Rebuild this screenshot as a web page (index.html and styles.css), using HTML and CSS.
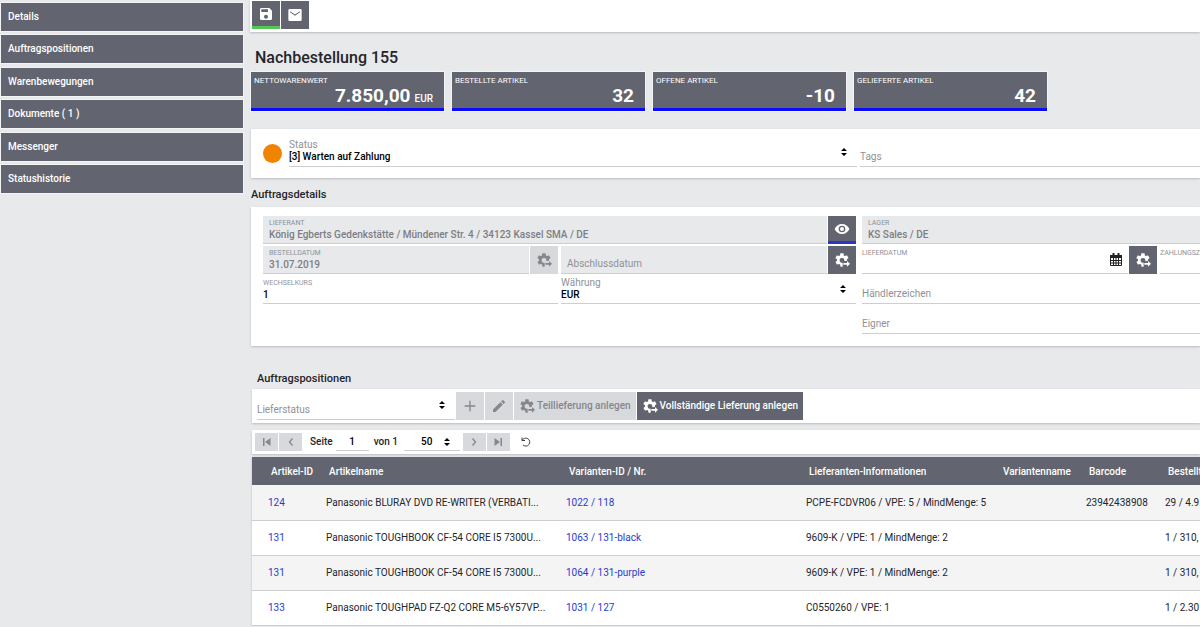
FILE: index.html
```html
<!DOCTYPE html>
<html lang="de">
<head>
<meta charset="utf-8">
<title>Nachbestellung 155</title>
<link rel="stylesheet" href="styles.css">
</head>
<body>
<svg class="sprite" aria-hidden="true">
  <symbol id="gear" viewBox="0 0 24 24">
    <path fill="currentColor" fill-rule="evenodd" d="M19.4 13c.1-.7.1-1.300 0-2l2.100-1.600c.2-.2.3-.4.1-.7l-2-3.400c-.1-.2-.4-.3-.6-.2l-2.500 1c-.5-.4-1.100-.7-1.700-1l-.4-2.600c0-.3-.2-.5-.5-.5h-4c-.3 0-.5.2-.5.5l-.4 2.600c-.6.3-1.200.6-1.700 1l-2.500-1c-.2-.1-.5 0-.6.2l-2 3.400c-.1.3-.1.5.1.7L4.600 11c-.1.700-.1 1.300 0 2l-2.100 1.600c-.2.2-.3.4-.1.7l2 3.400c.1.2.4.3.6.2l2.500-1c.5.4 1.100.7 1.700 1l.4 2.600c0 .3.2.5.5.5H13v-6a3.600 3.600 0 1 1 2.600-3.300v1.300Z"/>
    <path fill="currentColor" d="M14 16.500h5.500v-3l4.500 4.200-4.500 4.300v-3H14z"/>
  </symbol>
  <symbol id="sort" viewBox="0 0 8 10"><path fill="currentColor" d="M4 1 7 4H1zM4 9 7 6H1z"/></symbol>
</svg>
<div class="page">
  <nav class="sidebar">
    <a href="#details">Details</a>
    <a href="#positionen">Auftragspositionen</a>
    <a href="#waren">Warenbewegungen</a>
    <a href="#dokumente">Dokumente ( 1 )</a>
    <a href="#messenger">Messenger</a>
    <a href="#status">Statushistorie</a>
  </nav>
  <main class="main">
    <div class="toolbar">
      <button class="btn dark save" aria-label="Speichern"><svg class="ico" viewBox="0 0 24 24"><path fill="currentColor" d="M17 3H5a2 2 0 0 0-2 2v14a2 2 0 0 0 2 2h14a2 2 0 0 0 2-2V7zm-5 16a3 3 0 1 1 0-6 3 3 0 0 1 0 6zm3-10H5V5h10z"/></svg></button>
      <button class="btn dark" aria-label="E-Mail"><svg class="ico" viewBox="0 0 24 24"><path fill="currentColor" d="M20 3H4a2 2 0 0 0-2 2v14a2 2 0 0 0 2 2h16a2 2 0 0 0 2-2V5a2 2 0 0 0-2-2zm-.5 5L12 13 4.500 8V6.200l7.500 5 7.500-5z"/></svg></button>
    </div>
    <h1>Nachbestellung 155</h1>
    <div class="tiles">
      <div class="tile"><span class="cap">Nettowarenwert</span><p><strong>7.850,00</strong><small>EUR</small></p></div>
      <div class="tile"><span class="cap">Bestellte Artikel</span><p><strong>32</strong></p></div>
      <div class="tile"><span class="cap">Offene Artikel</span><p><strong>-10</strong></p></div>
      <div class="tile"><span class="cap">Gelieferte Artikel</span><p><strong>42</strong></p></div>
    </div>

    <section class="card status">
      <span class="dot"></span>
      <div class="field status-field">
        <label for="status">Status</label>
        <select id="status"><option>[3] Warten auf Zahlung</option></select>
        <svg class="sort"><use href="#sort"/></svg>
      </div>
      <div class="field bare grow"><input aria-label="Tags" placeholder="Tags"></div>
    </section>

    <h2>Auftragsdetails</h2>
    <section class="card details" id="details">
      <div class="half">
        <div class="pair wide">
          <div class="field filled"><label class="cap" for="lieferant">Lieferant</label><input id="lieferant" readonly value="König Egberts Gedenkstätte / Mündener Str. 4 / 34123 Kassel SMA / DE"></div>
          <button class="btn dark view" aria-label="Lieferant ansehen"><svg class="ico" viewBox="0 0 24 24"><path fill="currentColor" fill-rule="evenodd" d="M12 4.500C7 4.500 2.700 7.600 1 12c1.700 4.400 6 7.500 11 7.500s9.300-3.100 11-7.500c-1.700-4.400-6-7.500-11-7.500zM12 17a5 5 0 1 1 0-10 5 5 0 0 1 0 10zm0-2a3 3 0 1 0 0-6 3 3 0 0 0 0 6z"/></svg></button>
        </div>
        <div class="pair">
          <div class="field filled"><label class="cap" for="bestelldatum">Bestelldatum</label><input id="bestelldatum" readonly value="31.07.2019"></div>
          <button class="btn pale" disabled aria-label="Bestelldatum setzen"><svg class="ico"><use href="#gear"/></svg></button>
        </div>
        <div class="pair">
          <div class="field filled bare"><input aria-label="Abschlussdatum" placeholder="Abschlussdatum" readonly></div>
          <button class="btn dark" aria-label="Abschlussdatum setzen"><svg class="ico"><use href="#gear"/></svg></button>
        </div>
        <div class="field"><label class="cap" for="kurs">Wechselkurs</label><input id="kurs" value="1"></div>
        <div class="field"><label for="waehrung">Währung</label><select id="waehrung"><option>EUR</option></select><svg class="sort"><use href="#sort"/></svg></div>
      </div>
      <div class="half right">
        <div class="field filled wide"><label class="cap" for="lager">Lager</label><input id="lager" readonly value="KS Sales / DE"></div>
        <div class="pair">
          <div class="field"><label class="cap" for="lieferdatum">Lieferdatum</label><input id="lieferdatum">
            <svg class="cal" viewBox="0 0 12 13"><path fill="none" stroke="currentColor" d="M.5 2.500h11v10H.5zM.5 7.500h11M.5 10h11M3.500 5v7M6 5v7M8.500 5v7"/><path fill="currentColor" d="M0 2h12v3H0zM2.500 0h2v3h-2zM7.500 0h2v3h-2z"/></svg>
          </div>
          <button class="btn dark" aria-label="Lieferdatum setzen"><svg class="ico"><use href="#gear"/></svg></button>
        </div>
        <div class="field"><label class="cap" for="ziel">Zahlungsziel</label><input id="ziel"></div>
        <div class="field bare wide"><input aria-label="Händlerzeichen" placeholder="Händlerzeichen"></div>
        <div class="field bare wide"><input aria-label="Eigner" placeholder="Eigner"></div>
      </div>
    </section>

    <div class="positions" id="positionen">
      <h2>Auftragspositionen</h2>
      <div class="card filter">
        <div class="field bare lieferstatus"><select aria-label="Lieferstatus"><option>Lieferstatus</option></select><svg class="sort"><use href="#sort"/></svg></div>
        <button class="btn pale" disabled aria-label="Hinzufügen"><svg class="ico" viewBox="0 0 24 24"><path stroke="currentColor" stroke-width="2" d="M12 4v16M4 12h16"/></svg></button>
        <button class="btn pale" disabled aria-label="Bearbeiten"><svg class="ico" viewBox="0 0 24 24"><path fill="currentColor" d="M3 17.200V21h3.800L17.800 9.900l-3.700-3.700zM20.700 7a1 1 0 0 0 0-1.400l-2.300-2.300a1 1 0 0 0-1.400 0l-1.900 1.800 3.800 3.800z"/></svg></button>
        <button class="btn pale text" disabled><svg class="ico"><use href="#gear"/></svg>Teillieferung anlegen</button>
        <button class="btn dark text"><svg class="ico"><use href="#gear"/></svg>Vollständige Lieferung anlegen</button>
      </div>
      <div class="card pager">
        <button class="step" disabled aria-label="Erste Seite"><svg viewBox="0 0 12 12"><path fill="currentColor" d="M2 2h1.500v8H2zM9.500 2v8L4 6z"/></svg></button>
        <button class="step" disabled aria-label="Vorherige Seite"><svg viewBox="0 0 12 12"><path fill="none" stroke="currentColor" stroke-width="1.300" d="M7.500 2.500 4.500 6l3 3.500"/></svg></button>
        <label class="seite" for="seite">Seite</label>
        <input class="page-no" id="seite" value="1">
        <span class="von">von 1</span>
        <div class="per-page"><select aria-label="Einträge pro Seite"><option>50</option></select><svg class="sort"><use href="#sort"/></svg></div>
        <button class="step" disabled aria-label="Nächste Seite"><svg viewBox="0 0 12 12"><path fill="none" stroke="currentColor" stroke-width="1.300" d="M4.500 2.500 7.500 6l-3 3.500"/></svg></button>
        <button class="step" disabled aria-label="Letzte Seite"><svg viewBox="0 0 12 12"><path fill="currentColor" d="M8.500 2H10v8H8.500zM2.500 2v8L8 6z"/></svg></button>
        <button class="reload" aria-label="Neu laden"><svg viewBox="0 0 12 12"><path fill="none" stroke="currentColor" d="M2 1.500v3h3M2.200 4.300A4 4 0 1 1 3 9"/></svg></button>
      </div>
      <table>
        <colgroup><col class="c-id"><col class="c-name"><col class="c-var"><col class="c-lief"><col class="c-vname"><col class="c-code"><col></colgroup>
        <thead><tr><th>Artikel-ID</th><th>Artikelname</th><th>Varianten-ID / Nr.</th><th>Lieferanten-Informationen</th><th>Variantenname</th><th>Barcode</th><th>Bestellt</th></tr></thead>
        <tbody>
          <tr><td><a href="#124">124</a></td><td>Panasonic BLURAY DVD RE-WRITER (VERBATI...</td><td><a href="#1022">1022 / 118</a></td><td>PCPE-FCDVR06 / VPE: 5 / MindMenge: 5</td><td></td><td>23942438908</td><td>29 / 4.9</td></tr>
          <tr><td><a href="#131">131</a></td><td>Panasonic TOUGHBOOK CF-54 CORE I5 7300U...</td><td><a href="#1063">1063 / 131-black</a></td><td>9609-K / VPE: 1 / MindMenge: 2</td><td></td><td></td><td>1 / 310,</td></tr>
          <tr><td><a href="#131">131</a></td><td>Panasonic TOUGHBOOK CF-54 CORE I5 7300U...</td><td><a href="#1064">1064 / 131-purple</a></td><td>9609-K / VPE: 1 / MindMenge: 2</td><td></td><td></td><td>1 / 310,</td></tr>
          <tr><td><a href="#133">133</a></td><td>Panasonic TOUGHPAD FZ-Q2 CORE M5-6Y57VP...</td><td><a href="#1031">1031 / 127</a></td><td>C0550260 / VPE: 1</td><td></td><td></td><td>1 / 2.30</td></tr>
        </tbody>
      </table>
    </div>
  </main>
</div>
</body>
</html>
```
FILE: styles.css
```css
* { box-sizing: border-box; }
body {
  margin: 0;
  overflow: hidden;
  background: #e8e9eb;
  color: #23252b;
  font: 400 10px/12px Roboto, "Liberation Sans", sans-serif;
}
h1, h2, p { margin: 0; }
a { text-decoration: none; }
button, input, select { font: inherit; color: inherit; border: 0; margin: 0; padding: 0; border-radius: 0; background: none; }
.sprite { position: absolute; width: 0; height: 0; }

.page { display: flex; gap: 8px; }
.sidebar {
  flex: 0 0 243px;
  height: 193px;
  padding: 3px 0 0 1px;
  display: flex;
  flex-direction: column;
  justify-content: space-between;
}
.sidebar a {
  padding: 0 7px;
  background: #62656f;
  box-shadow: 0 0 0 1px #f3f4f5;
  color: #fff;
  font-weight: 500;
  line-height: 28px;
}
.main { flex: 1; min-width: 0; }
.card { background: #fff; box-shadow: 0 1px 2px #b9bbbe; }

.toolbar {
  display: flex;
  gap: 1px;
  height: 32px;
  margin-left: -1px;
  padding: 1px 2px;
  background: #fff;
  box-shadow: 0 1px 2px #b9bbbe;
}
.btn {
  display: flex;
  align-items: center;
  justify-content: center;
  flex: none;
  width: 28px;
  height: 28px;
  font-weight: 500;
}
.dark { background: #62656f; color: #fff; }
.pale { background: #d8d9dd; color: #85878c; }
.text { width: auto; gap: 2px; padding: 0 5px; }
.ico { width: 16px; height: 16px; }
.save { border-bottom: 3px solid #54c653; }
.view { border-bottom: 3px solid #2a35cf; }

h1 { padding: 16px 4px 4px; font-size: 16px; line-height: 20px; font-weight: 500; }
.tiles { display: flex; gap: 8px; }
.tile {
  width: 193px;
  height: 39px;
  padding: 3px 11px 0 3px;
  background: #62656f;
  border-bottom: 3px solid #0a0aff;
  box-shadow: 0 0 0 1px #f3f4f5;
  color: #fff;
}
.cap { font-size: 7px; text-transform: uppercase; }
.tile .cap { display: block; font-size: 8px; font-weight: 400; line-height: 11px; }
.tile p { text-align: right; line-height: 19px; }
.tile strong { font-size: 19px; font-weight: 700; }
.tile small { margin-left: 4px; font-size: 10px; font-weight: 500; }

.field {
  position: relative;
  display: flex;
  flex-direction: column;
  height: 28px;
  min-width: 0;
  border-bottom: 1px solid #cdced0;
}
.field label { color: #8f9196; line-height: 12px; white-space: nowrap; }
.field input, .field select { width: 100%; height: 12px; line-height: 12px; font-weight: 500; color: #000; outline: 0; }
select { appearance: none; }
.field ::placeholder { color: #8f9196; font-weight: 400; opacity: 1; }
.details .field { padding-top: 1px; }
.field.bare, .details .bare { padding-top: 12px; }
.field.filled { padding-left: 6px; background: #e8e9eb; }
.field.filled input { color: #7c7e84; }
.grow { flex: 1; }
.sort { position: absolute; right: 9px; top: 8px; width: 8px; height: 10px; color: #000; pointer-events: none; }
.cal { position: absolute; right: 6px; top: 7px; width: 12px; height: 13px; color: #222; }

.status { display: flex; align-items: flex-start; margin-top: 18px; padding: 10px 0 11px 12px; }
.dot { width: 19px; height: 19px; margin: 5px 7px 0 0; border-radius: 50%; background: #f08300; }
.status-field { width: 568px; margin-right: 3px; }
h2 { font-size: 11px; line-height: 14px; font-weight: 500; }
.status + h2 { padding: 10px 0 5px; }

.details { display: flex; gap: 6px; padding: 9px 0 12px 12px; }
.half { display: grid; grid-template-columns: 295px 295px; align-content: start; gap: 2px 3px; }
.right { flex: 1; min-width: 0; grid-template-columns: 295px minmax(0, 1fr); }
.wide { grid-column: 1 / -1; }
.pair { display: flex; gap: 1px; }
.pair .field { flex: 1; }

.positions { margin: 25px 0 0 1px; }
.positions h2 { padding: 1px 5px 3px; }
.filter { display: flex; gap: 1px; padding: 3px 5px; }
.lieferstatus { width: 198px; }
.lieferstatus select { color: #8f9196; font-weight: 400; }

.pager { display: flex; align-items: center; margin-top: 7px; padding: 3px; font-weight: 500; }
.step { width: 23px; height: 18px; margin-right: 1px; background: #d8d9dd; color: #85878c; }
.step svg, .reload svg { display: block; width: 12px; height: 12px; margin: 0 auto; }
.reload { margin-left: 9px; color: #444; }
.seite { margin: 0 3px 0 7px; }
.page-no { width: 33px; height: 18px; border-bottom: 1px solid #cdced0; text-align: center; color: #000; }
.von { margin: 0 6px 0 5px; }
.per-page { position: relative; width: 56px; margin-right: 3px; border-bottom: 1px solid #cdced0; }
.per-page select { width: 100%; height: 17px; padding-left: 17px; color: #000; }
.per-page .sort { top: 4px; }

table { width: 100%; margin-top: 3px; table-layout: fixed; border-collapse: collapse; background: #fff; box-shadow: 0 1px 2px #b9bbbe; }
.c-id { width: 64px; }
.c-name, .c-var { width: 240px; }
.c-lief { width: 194px; }
.c-vname { width: 86px; }
.c-code { width: 79px; }
th, td { padding: 1px 0 0 10px; text-align: left; white-space: nowrap; }
th { height: 28px; padding-left: 13px; background: #62656f; color: #fff; font-weight: 500; }
td { height: 35px; border-bottom: 1px solid #cdced0; }
td:first-child { padding-left: 16px; }
th:first-child { padding-left: 19px; }
tbody tr:nth-child(odd) { background: #f4f4f5; }
td a { color: #2a3bd0; }
```
